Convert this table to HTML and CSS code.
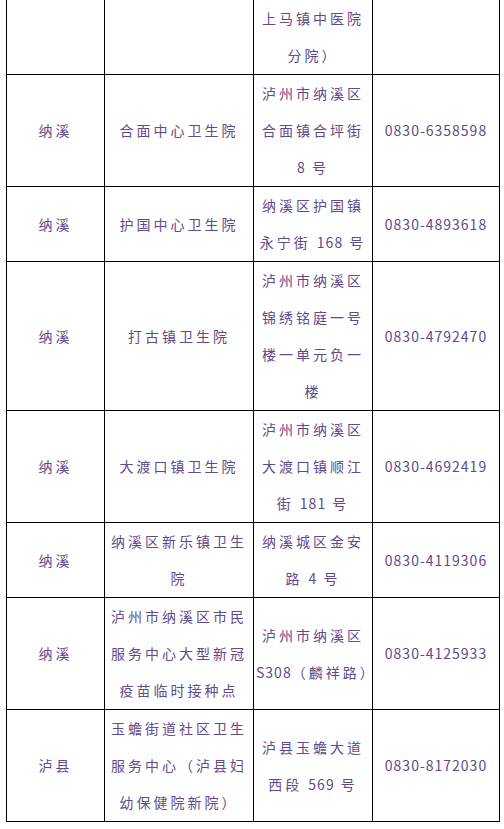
FILE: index.html
```html
<!DOCTYPE html>
<html lang="zh-CN">
<head>
<meta charset="utf-8">
<title>接种点</title>
<link rel="stylesheet" href="styles.css">
</head>
<body>
<table class="sites">
  <colgroup>
    <col class="c1"><col class="c2"><col class="c3"><col class="c4">
  </colgroup>
  <tbody>
    <tr class="first">
      <td></td>
      <td></td>
      <td>上马镇中医院<br>分院）</td>
      <td></td>
    </tr>
    <tr>
      <td>纳溪</td>
      <td>合面中心卫生院</td>
      <td>泸州市纳溪区<br>合面镇合坪街<br><span class="num">8</span> 号</td>
      <td><span class="num">0830-6358598</span></td>
    </tr>
    <tr>
      <td>纳溪</td>
      <td>护国中心卫生院</td>
      <td>纳溪区护国镇<br>永宁街 <span class="num">168</span> 号</td>
      <td><span class="num">0830-4893618</span></td>
    </tr>
    <tr>
      <td>纳溪</td>
      <td>打古镇卫生院</td>
      <td>泸州市纳溪区<br>锦绣铭庭一号<br>楼一单元负一<br>楼</td>
      <td><span class="num">0830-4792470</span></td>
    </tr>
    <tr>
      <td>纳溪</td>
      <td>大渡口镇卫生院</td>
      <td>泸州市纳溪区<br>大渡口镇顺江<br>街 <span class="num">181</span> 号</td>
      <td><span class="num">0830-4692419</span></td>
    </tr>
    <tr>
      <td>纳溪</td>
      <td>纳溪区新乐镇卫生<br>院</td>
      <td>纳溪城区金安<br>路 <span class="num">4</span> 号</td>
      <td><span class="num">0830-4119306</span></td>
    </tr>
    <tr>
      <td>纳溪</td>
      <td>泸州市纳溪区市民<br>服务中心大型新冠<br>疫苗临时接种点</td>
      <td>泸州市纳溪区<br><span class="num">S308</span>（麟祥路）</td>
      <td><span class="num">0830-4125933</span></td>
    </tr>
    <tr>
      <td>泸县</td>
      <td>玉蟾街道社区卫生<br>服务中心（泸县妇<br>幼保健院新院）</td>
      <td>泸县玉蟾大道<br>西段 <span class="num">569</span> 号</td>
      <td><span class="num">0830-8172030</span></td>
    </tr>
  </tbody>
</table>
</body>
</html>
```
FILE: styles.css
```css
html, body {
  margin: 0;
  padding: 0;
  background: #ffffff;
}

.sites {
  margin-left: 6px;
  width: 493px;
  table-layout: fixed;
  border-collapse: collapse;
  border-top: none;
  font-family: "Noto Sans CJK SC", "Noto Sans", sans-serif;
  font-size: 14px;
  color: #5f4a8a;
}

.c1 { width: 98px; }
.c2 { width: 149px; }
.c3 { width: 119px; }
.c4 { width: 127px; }

.sites td {
  border: 1px solid #000000;
  padding: 0 2px;
  line-height: 37px;
  text-align: center;
  vertical-align: middle;
  letter-spacing: 3px;
  white-space: nowrap;
}

.sites tr.first td {
  border-top: none;
}

.num {
  letter-spacing: 1px;
}
```
